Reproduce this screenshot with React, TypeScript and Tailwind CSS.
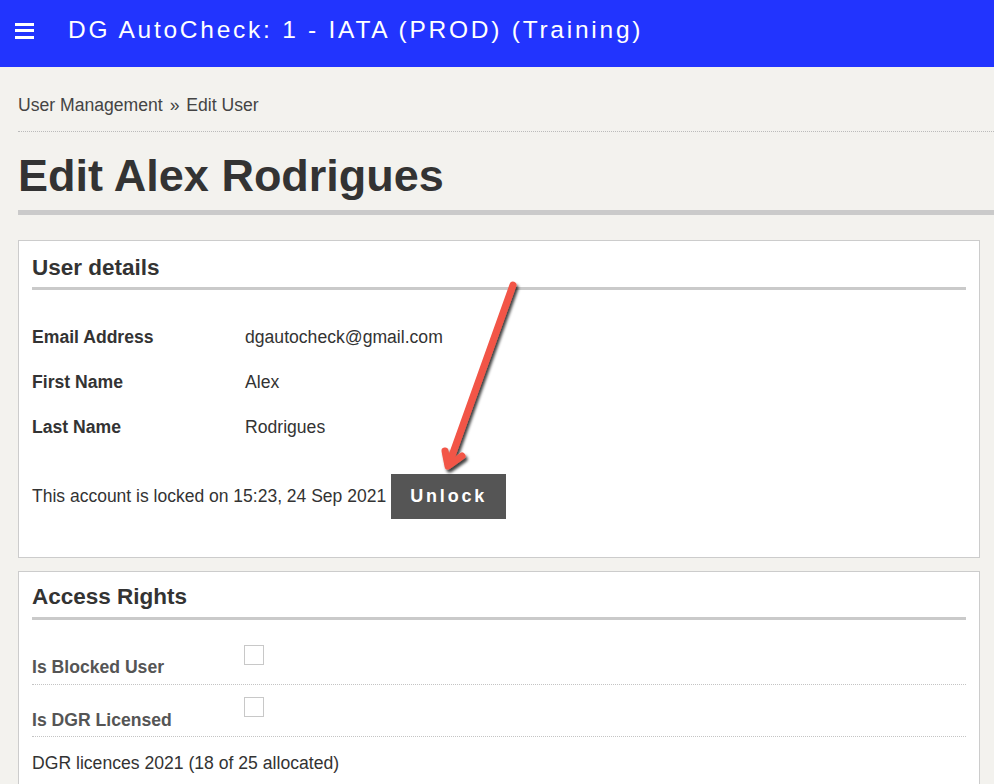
import React from "react";

const fieldRows = [
  { label: "Email Address", value: "dgautocheck@gmail.com" },
  { label: "First Name", value: "Alex" },
  { label: "Last Name", value: "Rodrigues" },
];

function Hamburger() {
  return (
    <div className="flex flex-col gap-[3.5px] w-[19px]">
      <span className="block h-[3px] bg-white" />
      <span className="block h-[3px] bg-white" />
      <span className="block h-[3px] bg-white" />
    </div>
  );
}

function Arrow() {
  // annotation drawn over the page
  return (
    <svg
      className="absolute left-0 top-0 pointer-events-none"
      width="994"
      height="784"
      viewBox="0 0 994 784"
    >
      <defs>
        <filter id="shadow" x="-50%" y="-50%" width="200%" height="200%">
          <feDropShadow dx="2" dy="3" stdDeviation="1.6" floodColor="#000" floodOpacity="0.75" />
        </filter>
      </defs>
      <g filter="url(#shadow)" stroke="#f25546" strokeWidth="7" strokeLinecap="round" strokeLinejoin="round" fill="none">
        <path d="M513 285 L449 464" />
        <path d="M445 451 L448 466 L462 456" />
      </g>
    </svg>
  );
}

export default function App() {
  return (
    <div className="relative min-h-screen bg-[#f3f2ee] text-[#333] font-['Liberation_Sans',Arial,sans-serif]">
      {/* Top bar */}
      <div className="h-[67px] bg-[#2234fe] flex items-center pb-[6px]">
        <div className="pl-[15px] pr-[34px]">
          <Hamburger />
        </div>
        <div className="text-white text-[24.5px] tracking-[2.75px] leading-none">
          DG AutoCheck: 1 - IATA (PROD) (Training)
        </div>
      </div>

      <div className="pl-[18px]">
        {/* Breadcrumb */}
        <div className="pt-[28px] pb-[16px] text-[17.6px] leading-[20px] text-[#444] border-b border-dotted border-[#bbb]">
          User Management <span className="px-[2px]">»</span> Edit User
        </div>

        {/* Page title */}
        <h1 className="mt-[18px] pb-[8px] text-[45px] font-bold leading-[52px] text-[#333] border-b-[5px] border-[#cacaca]">
          Edit Alex Rodrigues
        </h1>

        {/* User details */}
        <div className="mt-[25px] mr-[14px] bg-white border border-[#cccccc] px-[13px] pb-[38px]">
          <h2 className="pt-[14px] pb-[6px] text-[22.5px] font-bold leading-[26px] border-b-[3px] border-[#cacaca]">
            User details
          </h2>
          <div className="pt-[37px] flex flex-col gap-[25px]">
            {fieldRows.map((row, i) => (
              <div key={i} className="flex text-[17.6px] leading-[20px]">
                <div className="w-[213px] font-bold">{row.label}</div>
                <div>{row.value}</div>
              </div>
            ))}
          </div>
          <div className="mt-[37px] flex items-center text-[17.5px]">
            <span>This account is locked on 15:23, 24 Sep 2021</span>
            <button className="ml-[5px] h-[45px] w-[115px] bg-[#555555] text-white font-bold text-[18px] tracking-[2.8px]">
              Unlock
            </button>
          </div>
        </div>

        {/* Access rights */}
        <div className="mt-[13px] mr-[14px] bg-white border border-[#cccccc] px-[13px] pb-[20px]">
          <h2 className="pt-[12px] pb-[7px] text-[22.5px] font-bold leading-[26px] border-b-[3px] border-[#cacaca]">
            Access Rights
          </h2>
          <div className="pt-[25px]">
            <div className="flex border-b border-dotted border-[#c4c4c4] pb-[7px]">
              <div className="w-[212px] pt-[12px] text-[17.6px] leading-[20px] font-bold text-[#555]">Is Blocked User</div>
              <div className="w-[20px] h-[20px] border border-[#c8c8c8] bg-white" />
            </div>
            <div className="flex border-b border-dotted border-[#c4c4c4] pt-[12px] pb-[6px]">
              <div className="w-[212px] pt-[13px] text-[17.6px] leading-[20px] font-bold text-[#555]">Is DGR Licensed</div>
              <div className="w-[20px] h-[20px] border border-[#c8c8c8] bg-white" />
            </div>
            <div className="pt-[16px] text-[17.6px] leading-[20px]">DGR licences 2021 (18 of 25 allocated)</div>
          </div>
        </div>
      </div>

      <Arrow />
    </div>
  );
}
